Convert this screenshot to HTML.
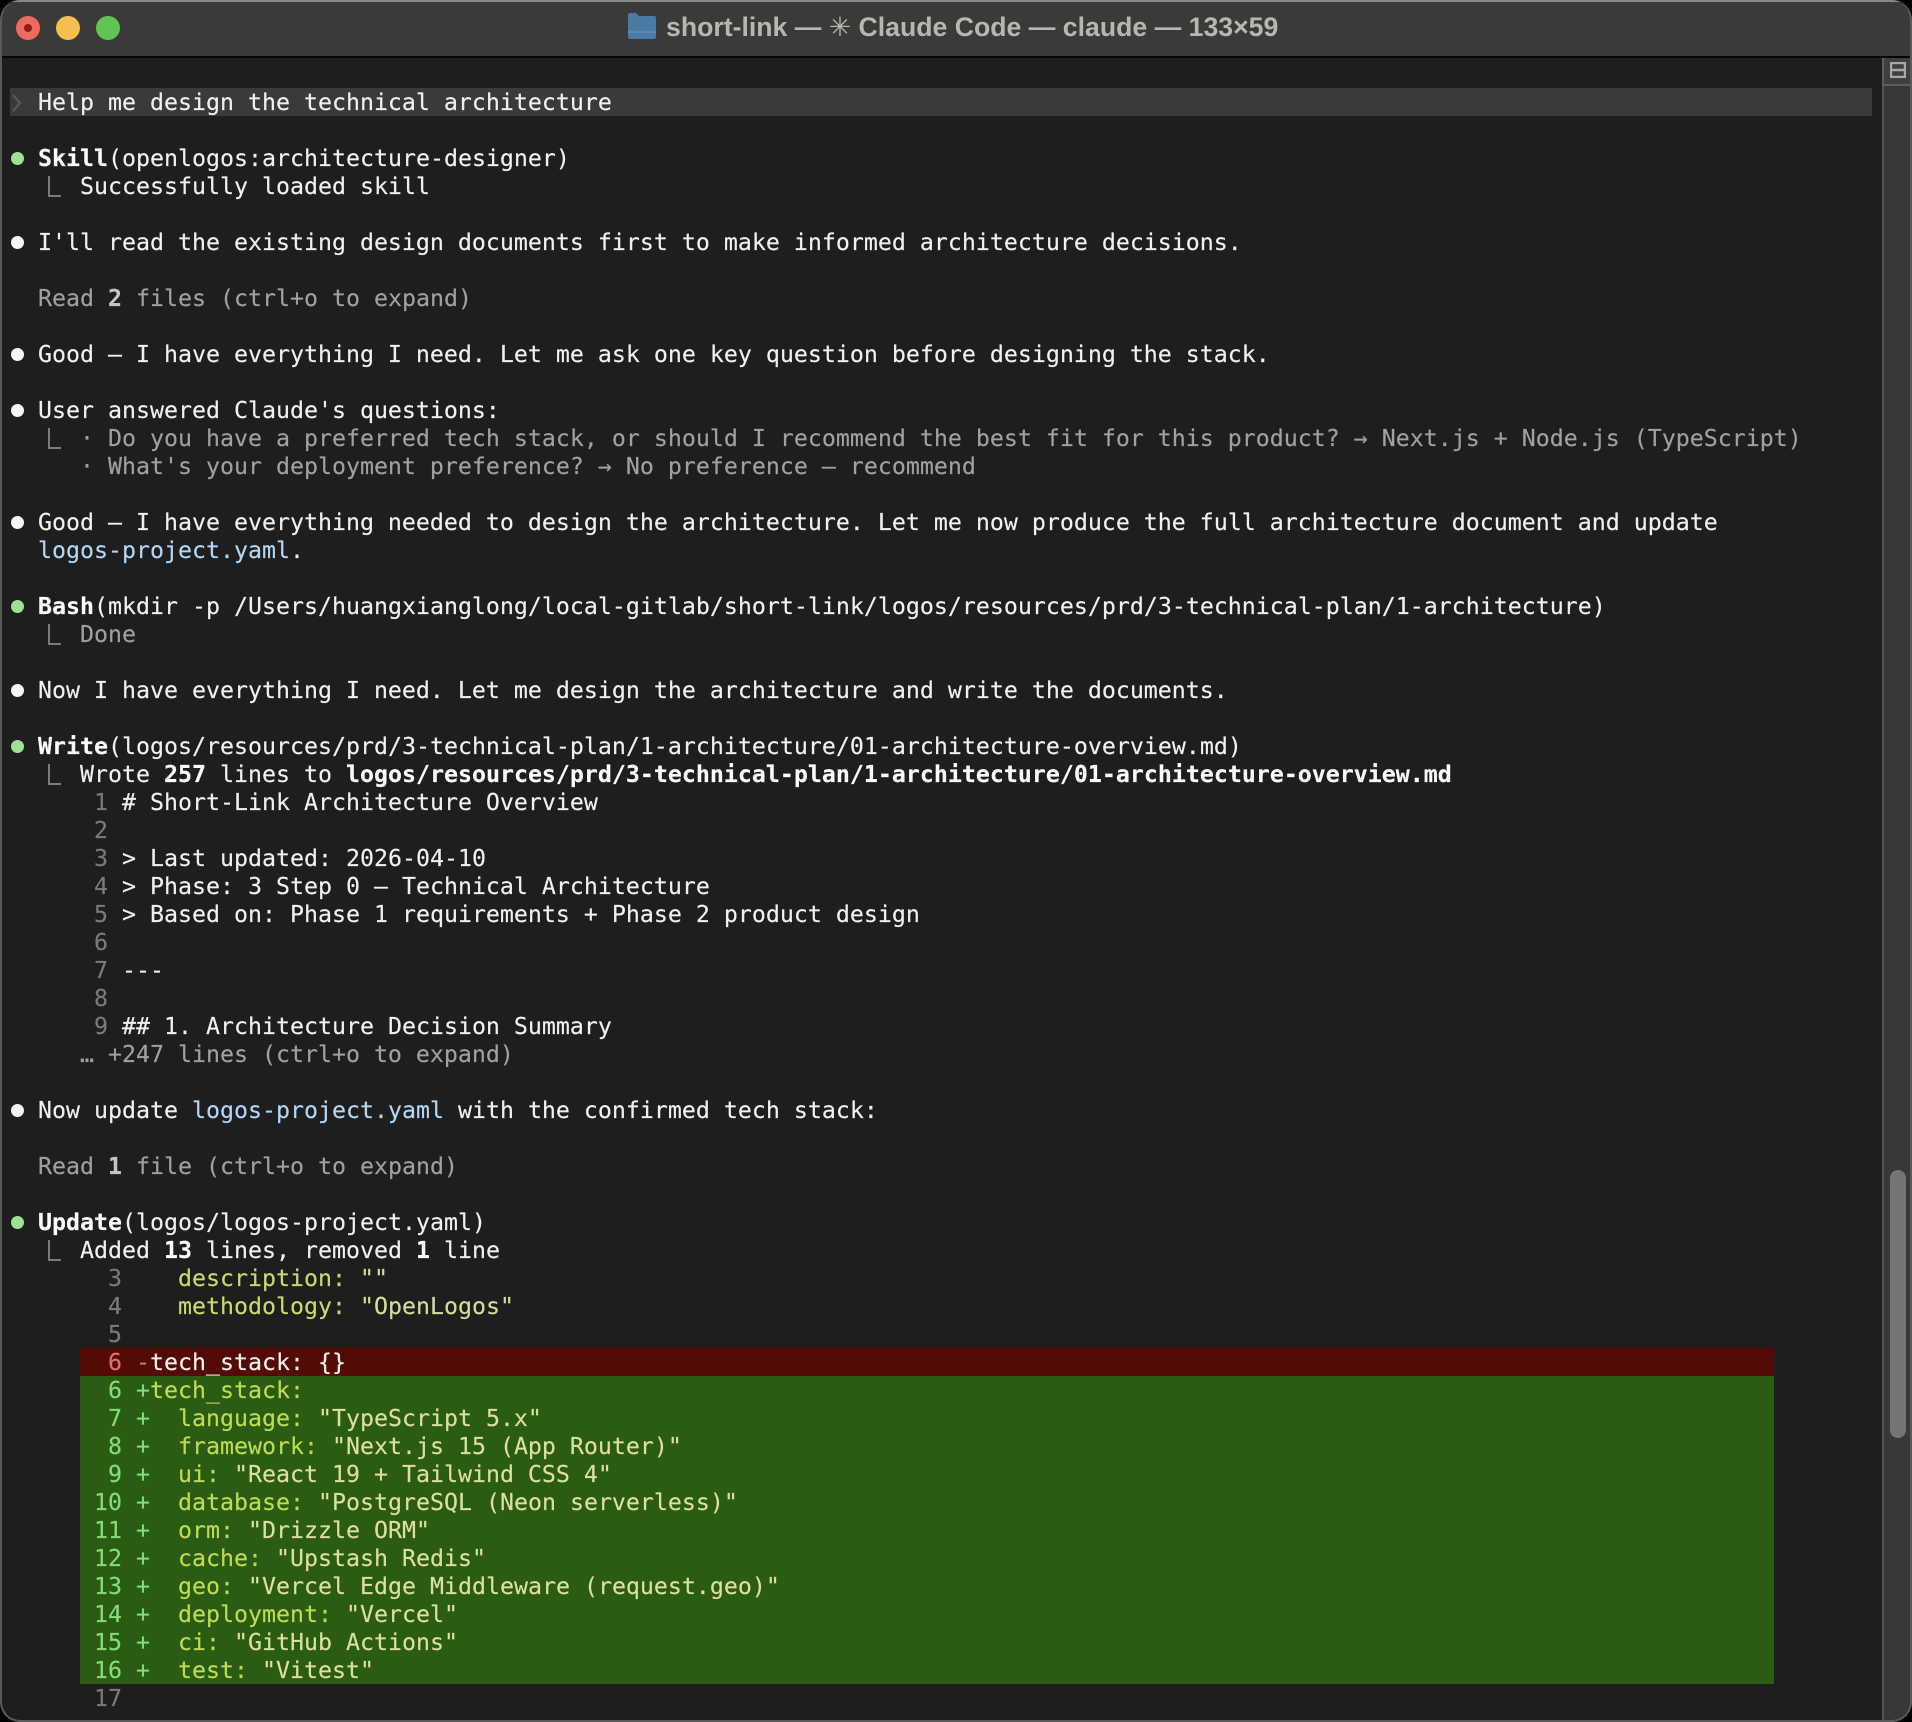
<!DOCTYPE html>
<html lang="en"><head><meta charset="utf-8"><title>short-link</title>
<style>
html,body{margin:0;padding:0;background:#000;}
body{width:1912px;height:1722px;overflow:hidden;position:relative;}
#win{position:absolute;left:0;top:0;width:1912px;height:1722px;background:#1e1e1e;border-radius:20px;overflow:hidden;box-sizing:border-box;}
#frame{position:absolute;left:0;top:0;width:1912px;height:1722px;box-sizing:border-box;border:2px solid #5a5a5a;border-top:0;border-radius:20px;z-index:20;pointer-events:none;}
#bar{position:absolute;left:0;top:0;width:1912px;height:56px;background:#3b3a39;border-top:2px solid #8a8988;box-sizing:border-box;}
#barline{position:absolute;left:0;top:56px;width:1912px;height:2px;background:#050505;}
.tl{position:absolute;top:16px;width:24px;height:24px;border-radius:50%;}
.tl i{position:absolute;left:8px;top:8px;width:8px;height:8px;border-radius:50%;background:#8e1d14;}
#title{position:absolute;left:666px;top:8px;height:38px;font:bold 26.65px/38px "Liberation Sans",sans-serif;color:#b8b6b3;white-space:pre;}
#title span{font-weight:normal;}
#folder{position:absolute;left:627px;top:12px;}
#track{position:absolute;left:1882px;top:58px;width:30px;height:1664px;background:#393837;border-left:2px solid #555453;box-sizing:border-box;}
#split{position:absolute;left:1882px;top:58px;width:30px;height:28px;background:#403f3e;border-left:2px solid #5e5d5c;border-bottom:2px solid #5e5d5c;box-sizing:border-box;}
#thumb{position:absolute;left:1890px;top:1170px;width:16px;height:268px;border-radius:8px;background:#757575;}
.bg{position:absolute;}
pre{position:absolute;left:10px;top:89px;margin:0;font:23.25px/28px "DejaVu Sans Mono","Liberation Mono",monospace;color:#f0f0f0;letter-spacing:0;white-space:pre;-webkit-text-stroke:0.15px currentColor;}
.bul{position:absolute;left:11px;width:13px;height:13px;border-radius:50%;background:#f4f4f4;}
.g{background:#9fe294;}
.elb{position:absolute;left:48px;width:11px;height:19px;border-left:2px solid #7b7b7b;border-bottom:2px solid #7b7b7b;}
b{font-weight:bold;color:#fafafa;}
.d{color:#a0a0a0;}
.d b{color:#c4c4c4;}
.n{color:#7a7a7a;}
.l{color:#b3d6f5;}
.k{color:#c6dc6a;}
.s{color:#d8da9c;}
.gn{color:#84dd78;}
.gk{color:#bfdc50;}
.gs{color:#dcdf9f;}
.r{color:#e26f6a;}
</style></head><body>
<div id="win">
<div id="bar"></div><div id="barline"></div>
<div class="tl" style="left:16px;background:#ec6a5e"><i></i></div>
<div class="tl" style="left:56px;background:#f4bf4f"></div>
<div class="tl" style="left:96px;background:#61c554"></div>
<svg id="folder" width="30" height="28" viewBox="0 0 30 28"><path d="M1 3q0-2 2-2h6l3 3h15q2 0 2 2v19q0 2-2 2H3q-2 0-2-2z" fill="#4a7ba6"/><path d="M1 19h28v2H1z" fill="#5a8ab3"/></svg>
<div id="title">short-link — <span>✳</span> Claude Code — claude — 133×59</div>
<div id="track"></div><div id="split"></div>
<svg style="position:absolute;left:1890px;top:62px" width="16" height="16" viewBox="0 0 16 16"><rect x="1" y="1" width="14" height="14" fill="none" stroke="#a8a8a8" stroke-width="2.4"/><path d="M1 8h14" stroke="#a8a8a8" stroke-width="2.4"/></svg>
<div id="thumb"></div>
<div class="bg" style="left:10px;top:88px;width:1862px;height:28px;background:#3a3a3a"></div>
<div class="bg" style="left:80px;top:1348px;width:1694px;height:28px;background:#540a05"></div>
<div class="bg" style="left:80px;top:1376px;width:1694px;height:308px;background:#2b5c13"></div>
<svg style="position:absolute;left:10px;top:92px" width="14" height="22" viewBox="0 0 14 22"><path d="M3 3l7 8-7 8" fill="none" stroke="#5c5c5c" stroke-width="2"/></svg>
<div class="bul g" style="top:152px"></div>
<div class="bul" style="top:236px"></div>
<div class="bul" style="top:348px"></div>
<div class="bul" style="top:404px"></div>
<div class="bul" style="top:516px"></div>
<div class="bul g" style="top:600px"></div>
<div class="bul" style="top:684px"></div>
<div class="bul g" style="top:740px"></div>
<div class="bul" style="top:1104px"></div>
<div class="bul g" style="top:1216px"></div>
<div class="elb" style="top:176px"></div>
<div class="elb" style="top:428px"></div>
<div class="elb" style="top:624px"></div>
<div class="elb" style="top:764px"></div>
<div class="elb" style="top:1240px"></div>
<pre>  Help me design the technical architecture

  <b>Skill</b>(openlogos:architecture-designer)
     Successfully loaded skill

  I'll read the existing design documents first to make informed architecture decisions.

  <span class="d">Read <b>2</b> files (ctrl+o to expand)</span>

  Good — I have everything I need. Let me ask one key question before designing the stack.

  User answered Claude's questions:
<span class="d">     · Do you have a preferred tech stack, or should I recommend the best fit for this product? → Next.js + Node.js (TypeScript)
     · What's your deployment preference? → No preference — recommend</span>

  Good — I have everything needed to design the architecture. Let me now produce the full architecture document and update
  <span class="l">logos-project.yaml</span>.

  <b>Bash</b>(mkdir -p /Users/huangxianglong/local-gitlab/short-link/logos/resources/prd/3-technical-plan/1-architecture)
     <span class="d">Done</span>

  Now I have everything I need. Let me design the architecture and write the documents.

  <b>Write</b>(logos/resources/prd/3-technical-plan/1-architecture/01-architecture-overview.md)
     Wrote <b>257</b> lines to <b>logos/resources/prd/3-technical-plan/1-architecture/01-architecture-overview.md</b>
      <span class="n">1</span> # Short-Link Architecture Overview
      <span class="n">2</span>
      <span class="n">3</span> &gt; Last updated: 2026-04-10
      <span class="n">4</span> &gt; Phase: 3 Step 0 — Technical Architecture
      <span class="n">5</span> &gt; Based on: Phase 1 requirements + Phase 2 product design
      <span class="n">6</span>
      <span class="n">7</span> ---
      <span class="n">8</span>
      <span class="n">9</span> ## 1. Architecture Decision Summary
<span class="d">     … +247 lines (ctrl+o to expand)</span>

  Now update <span class="l">logos-project.yaml</span> with the confirmed tech stack:

  <span class="d">Read <b>1</b> file (ctrl+o to expand)</span>

  <b>Update</b>(logos/logos-project.yaml)
     Added <b>13</b> lines, removed <b>1</b> line
       <span class="n">3</span>    <span class="k">description:</span> <span class="s">""</span>
       <span class="n">4</span>    <span class="k">methodology:</span> <span class="s">"OpenLogos"</span>
       <span class="n">5</span>
       <span class="r">6 -</span>tech_stack: {}
       <span class="gn">6 +</span><span class="gk">tech_stack:</span>
       <span class="gn">7 +</span>  <span class="gk">language:</span> <span class="gs">"TypeScript 5.x"</span>
       <span class="gn">8 +</span>  <span class="gk">framework:</span> <span class="gs">"Next.js 15 (App Router)"</span>
       <span class="gn">9 +</span>  <span class="gk">ui:</span> <span class="gs">"React 19 + Tailwind CSS 4"</span>
      <span class="gn">10 +</span>  <span class="gk">database:</span> <span class="gs">"PostgreSQL (Neon serverless)"</span>
      <span class="gn">11 +</span>  <span class="gk">orm:</span> <span class="gs">"Drizzle ORM"</span>
      <span class="gn">12 +</span>  <span class="gk">cache:</span> <span class="gs">"Upstash Redis"</span>
      <span class="gn">13 +</span>  <span class="gk">geo:</span> <span class="gs">"Vercel Edge Middleware (request.geo)"</span>
      <span class="gn">14 +</span>  <span class="gk">deployment:</span> <span class="gs">"Vercel"</span>
      <span class="gn">15 +</span>  <span class="gk">ci:</span> <span class="gs">"GitHub Actions"</span>
      <span class="gn">16 +</span>  <span class="gk">test:</span> <span class="gs">"Vitest"</span>
      <span class="n">17</span></pre>
</div>
<div id="frame"></div>
</body></html>
